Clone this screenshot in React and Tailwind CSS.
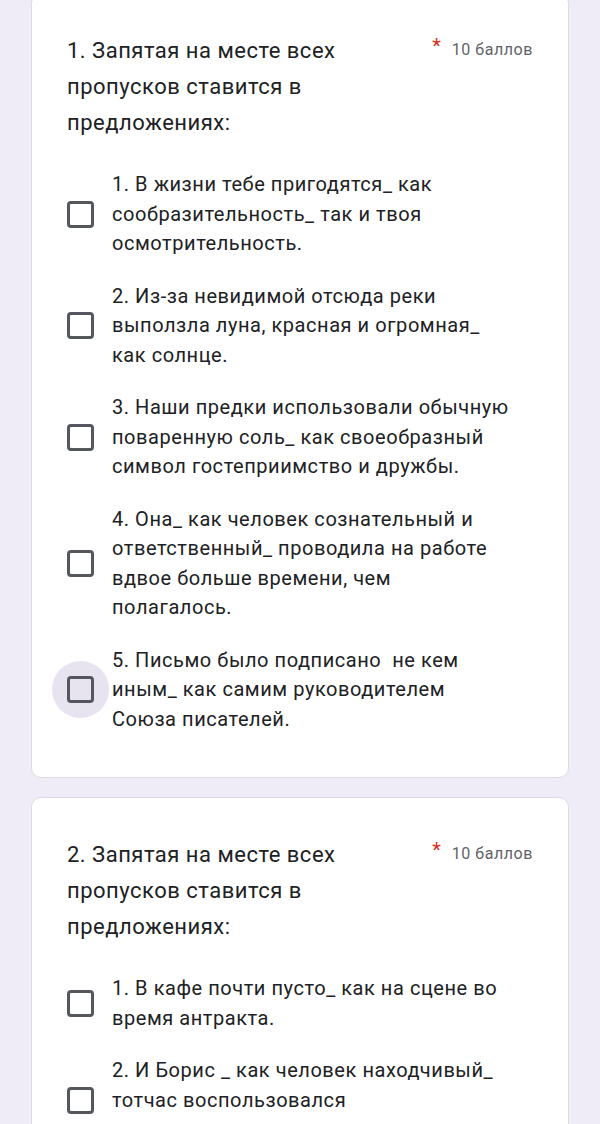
import React from "react";

const q1 = [
  ["1. В жизни тебе пригодятся_ как", "сообразительность_ так и твоя", "осмотрительность."],
  ["2. Из-за невидимой отсюда реки", "выползла луна, красная и огромная_", "как солнце."],
  ["3. Наши предки использовали обычную", "поваренную соль_ как своеобразный", "символ гостеприимство и дружбы."],
  ["4. Она_ как человек сознательный и", "ответственный_ проводила на работе", "вдвое больше времени, чем", "полагалось."],
  ["5. Письмо было подписано  не кем", "иным_ как самим руководителем", "Союза писателей."],
];

const q2 = [
  ["1. В кафе почти пусто_ как на сцене во", "время антракта."],
  ["2. И Борис _ как человек находчивый_", "тотчас воспользовался", "исключительностью своего положения."],
];

function Lines({ lines }) {
  return (
    <>
      {lines.map((l, i) => (
        <span key={i} className="block whitespace-pre">
          {l}
        </span>
      ))}
    </>
  );
}

function Option({ lines, focused }) {
  return (
    <div className="flex items-center">
      <div className="relative w-[27px] h-[27px] shrink-0">
        {focused && (
          <div className="absolute left-[-15px] top-[-15px] w-[57px] h-[57px] rounded-full bg-[#e7e3ef]" />
        )}
        <div className="relative w-[27px] h-[27px] border-[3px] border-[#55575f] rounded-[4px] bg-transparent" />
      </div>
      <div className="ml-[18px] text-[20px] leading-[29.5px] tracking-[0.55px] text-[#202124]">
        <Lines lines={lines} />
      </div>
    </div>
  );
}

function Card({ title, options, focusedIndex }) {
  return (
    <div className="bg-white border border-[#dadce0] rounded-[10px] pt-[39px] pl-[35px] pr-[35px] pb-[43px]">
      <div className="flex items-start">
        <div className="flex-1 text-[22px] leading-[36px] tracking-[0.5px] text-[#202124]">
          <Lines lines={title} />
        </div>
        <div className="flex shrink-0 items-baseline gap-[11px] mt-[5px]">
          <span className="text-[20px] leading-none text-[#d93025] -translate-y-[2px]">*</span>
          <span className="text-[16px] leading-[24px] tracking-[0.55px] text-[#5f6368]">10 баллов</span>
        </div>
      </div>
      <div className="mt-[29px] flex flex-col gap-[23px]">
        {options.map((o, i) => (
          <Option key={i} lines={o} focused={i === focusedIndex} />
        ))}
      </div>
    </div>
  );
}

export default function App() {
  return (
    <div className="min-h-screen flex flex-col bg-[#efebf7] px-[31px] font-['Roboto',_'Noto_Sans',_sans-serif]">
      <div className="-mt-[7px] flex flex-col gap-[19px] pb-[20px]">
        <Card
          title={["1. Запятая на месте всех", "пропусков ставится в", "предложениях:"]}
          options={q1}
          focusedIndex={4}
        />
        <Card
          title={["2. Запятая на месте всех", "пропусков ставится в", "предложениях:"]}
          options={q2}
          focusedIndex={-1}
        />
      </div>
    </div>
  );
}
